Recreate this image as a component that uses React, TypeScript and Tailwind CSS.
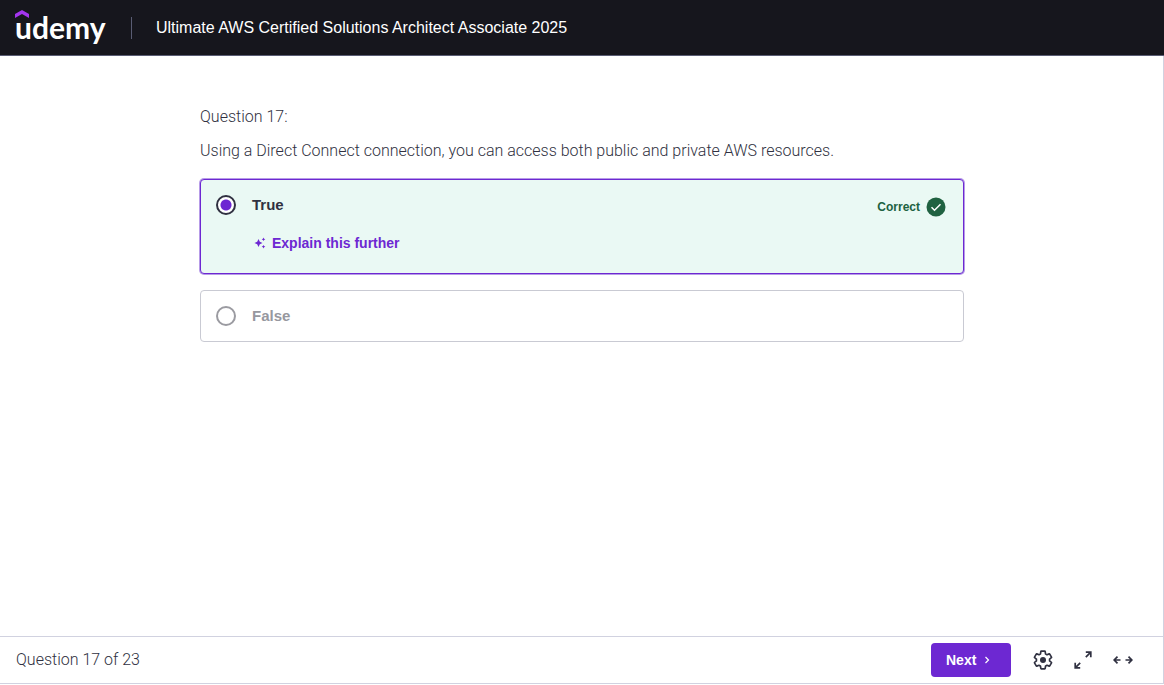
import React, { useState } from "react";

function Logo() {
  return (
    <a href="#" className="relative block w-[92px] pb-[2px] font-['Lato',sans-serif] text-[30px] leading-8 font-bold text-white">
      <svg viewBox="0 0 14 8" className="absolute -top-px left-0 h-2 w-[14px]" aria-hidden="true">
        <path d="M7 0 14 4v4L7 4 0 8V4z" fill="#a435f0" />
      </svg>
      udemy
    </a>
  );
}

function SparkleIcon() {
  return (
    <svg viewBox="0 0 12 12" className="size-3" fill="currentColor" aria-hidden="true">
      <path d="M4.5 2 5.8 4.7 8.5 6 5.8 7.3 4.5 10 3.2 7.3.5 6l2.700-1.300z" />
      <path d="m9.500.5.6 1.200 1.200.6-1.200.6-.6 1.200-.6-1.200-1.200-.6 1.200-.6z" />
      <path d="m9.500 7.900.6 1.200 1.200.6-1.200.6-.6 1.200-.6-1.200-1.200-.6 1.200-.6z" />
    </svg>
  );
}

function CorrectIcon() {
  return (
    <svg viewBox="0 0 20 20" className="size-5" aria-hidden="true">
      <circle cx="10" cy="10" r="9.500" fill="#206241" />
      <path d="m5.500 10.200 3 3 6-6" fill="none" stroke="#fff" strokeWidth="1.500" />
    </svg>
  );
}

function GearIcon() {
  return (
    <svg viewBox="0 0 24 24" className="size-6" fill="currentColor" aria-hidden="true">
      <path
        transform="translate(1.440 1.440) scale(.88)"
        fill="none"
        stroke="currentColor"
        strokeWidth="1.900"
        strokeLinejoin="round"
        d="M19.430 12.980c.04-.32.07-.64.07-.98s-.03-.66-.07-.98l2.110-1.650c.19-.15.24-.42.12-.64l-2-3.460a.5.5 0 0 0-.61-.22l-2.490 1c-.52-.4-1.080-.73-1.690-.98l-.38-2.650A.488.488 0 0 0 14 2h-4c-.25 0-.46.18-.49.42l-.38 2.650c-.61.25-1.170.59-1.690.98l-2.490-1a.5.5 0 0 0-.61.22l-2 3.460c-.13.22-.07.49.12.64l2.110 1.650c-.04.32-.07.65-.07.98s.03.66.07.98l-2.110 1.650c-.19.15-.24.42-.12.64l2 3.460c.12.22.39.3.61.22l2.490-1c.52.4 1.080.73 1.690.98l.38 2.650c.03.24.24.42.49.42h4c.25 0 .46-.18.49-.42l.38-2.650c.61-.25 1.170-.59 1.690-.98l2.490 1c.23.09.49 0 .61-.22l2-3.460c.12-.22.07-.49-.12-.64z"
      />
      <circle cx="12" cy="12" r="3" />
    </svg>
  );
}

function DiagonalArrowsIcon() {
  return (
    <svg viewBox="0 0 20 20" className="size-5" fill="none" stroke="currentColor" strokeWidth="1.700" aria-hidden="true">
      <path d="M12.800 2.200h5v5M17.800 2.200l-5 5M2.200 12.800v5h5M2.200 17.800l5-5" />
    </svg>
  );
}

function HorizontalArrowsIcon() {
  return (
    <svg viewBox="0 0 20 20" className="size-5" fill="none" stroke="currentColor" strokeWidth="1.700" aria-hidden="true">
      <path d="M7.500 10h-6M4.500 6.700 1.200 10l3.300 3.300M12.500 10h6M15.500 6.700 18.800 10l-3.300 3.300" />
    </svg>
  );
}

const radio =
  "m-0 size-5 shrink-0 appearance-none rounded-full border-2 bg-white checked:bg-[radial-gradient(circle,#6d28d2_5px,#ffffff_6px)]";

export default function App() {
  const [answer, setAnswer] = useState("true");
  return (
    <div className="flex min-h-screen flex-col bg-white pb-px font-['Liberation_Sans',Arial,sans-serif] text-[#303141]">
      <header className="flex h-14 items-center border-b border-[#595c73] bg-[#16161d] px-[15px]">
        <Logo />
        <div className="mr-6 ml-6 h-[22px] w-px bg-[#595c73]" />
        <h1 className="text-base text-white">Ultimate AWS Certified Solutions Architect Associate 2025</h1>
      </header>

      <main className="flex-1 px-4 pt-[49px] shadow-[inset_-1px_0_0_#d1d2e0]">
        <form className="mx-auto max-w-[764px]">
          <div className="mb-4 flex flex-col gap-[10px] font-['Roboto',sans-serif] text-base font-light">
            <p>Question 17:</p>
            <p>Using a Direct Connect connection, you can access both public and private AWS resources.</p>
          </div>

          <div className="flex flex-col gap-4">
            <div className="flex h-[95px] items-start justify-between rounded border border-[#6d28d2] bg-[#eaf9f4] px-[15px] py-[15px] shadow-[0_0_0_1px_#b79be8]">
              <div>
                <div className="flex items-center gap-4">
                  <input
                    id="answer-true"
                    type="radio"
                    name="answer"
                    value="true"
                    checked={answer === "true"}
                    onChange={() => setAnswer("true")}
                    className={radio + " border-[#303141]"}
                  />
                  <label htmlFor="answer-true" className="text-[15px] leading-5 font-bold">
                    True
                  </label>
                </div>
                <button type="button" className="mt-[18px] ml-[38px] flex items-center gap-[6px] text-sm font-bold text-[#6d28d2]">
                  <SparkleIcon />
                  Explain this further
                </button>
              </div>
              <div className="mt-[2px] mr-[2px] flex items-center gap-[6px] text-xs font-bold text-[#206241]">
                Correct
                <CorrectIcon />
              </div>
            </div>

            <div className="flex h-[52px] items-center gap-4 rounded border border-[#c9cad3] px-[15px]">
              <input
                id="answer-false"
                type="radio"
                name="answer"
                value="false"
                checked={answer === "false"}
                onChange={() => setAnswer("false")}
                className={radio + " border-[#9b9ba1]"}
              />
              <label htmlFor="answer-false" className="text-[15px] leading-5 font-bold text-[#97989f]">
                False
              </label>
            </div>
          </div>
        </form>
      </main>

      <footer className="flex h-12 items-center justify-between border-y border-r border-[#d1d2e0] pr-5 pl-4">
        <p className="font-['Roboto',sans-serif] text-base font-light">Question 17 of 23</p>
        <div className="flex items-center">
          <button type="button" className="mr-3 flex h-[34px] w-20 items-center rounded bg-[#6d28d2] pl-[15px] text-sm font-bold text-white">
            Next
            <svg viewBox="0 0 12 12" className="ml-[5px] size-3" fill="none" stroke="currentColor" strokeWidth="1.200" aria-hidden="true">
              <path d="m4.500 3 3 3-3 3" />
            </svg>
          </button>
          <button type="button" aria-label="Settings" className="grid size-10 place-items-center">
            <GearIcon />
          </button>
          <button type="button" aria-label="Fullscreen" className="grid size-10 place-items-center">
            <DiagonalArrowsIcon />
          </button>
          <button type="button" aria-label="Expanded view" className="grid size-10 place-items-center">
            <HorizontalArrowsIcon />
          </button>
        </div>
      </footer>
    </div>
  );
}
